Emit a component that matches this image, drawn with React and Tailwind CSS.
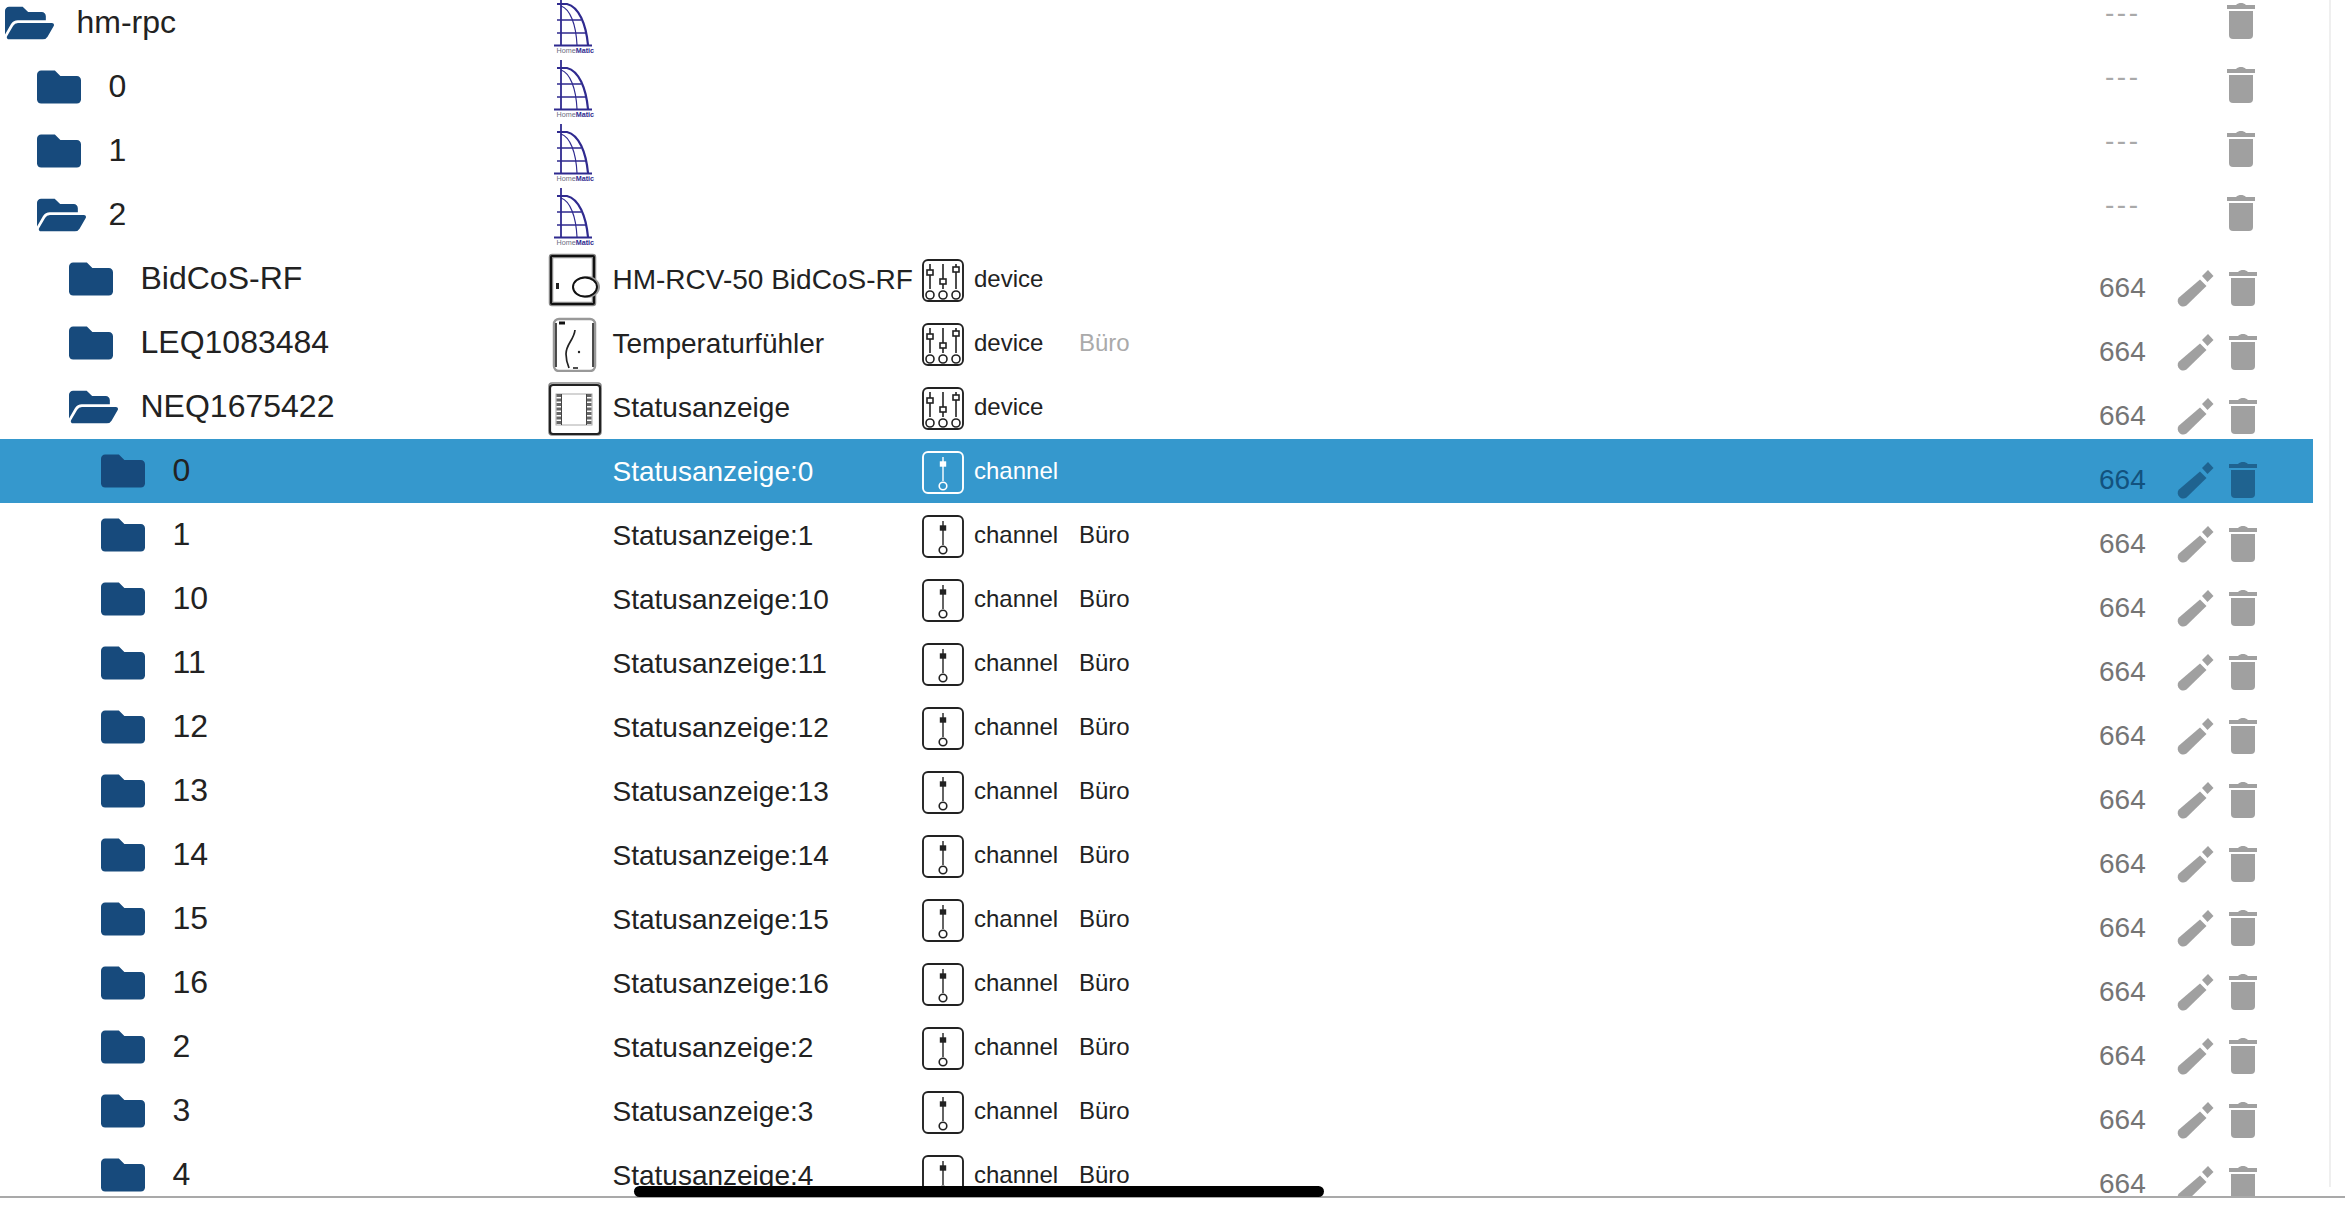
import { FaFolder, FaFolderOpen } from 'react-icons/fa';

const rows = [
  { level: 0, label: 'hm-rpc', open: true, image: 'logo' },
  { level: 1, label: '0', image: 'logo' },
  { level: 1, label: '1', image: 'logo' },
  { level: 1, label: '2', open: true, image: 'logo' },
  { level: 2, label: 'BidCoS-RF', image: 'door', name: 'HM-RCV-50 BidCoS-RF', type: 'device' },
  { level: 2, label: 'LEQ1083484', image: 'sensor', name: 'Temperaturfühler', type: 'device', room: 'Büro', roomMuted: true },
  { level: 2, label: 'NEQ1675422', open: true, image: 'display', name: 'Statusanzeige', type: 'device' },
  { level: 3, label: '0', name: 'Statusanzeige:0', type: 'channel', selected: true },
  ...['1', '10', '11', '12', '13', '14', '15', '16', '2', '3', '4'].map((n) => ({
    level: 3,
    label: n,
    name: `Statusanzeige:${n}`,
    type: 'channel',
    room: 'Büro',
  })),
];

const indent = ['pl-[5px]', 'pl-[37px]', 'pl-[69px]', 'pl-[101px]'];

const HomeMaticLogo = () => (
  <svg viewBox="0 0 58 58" className="w-[58px] h-[58px] overflow-visible" fill="none" stroke="#2f2a8f">
    <path d="M15 2v49" strokeWidth="1.8" />
    <path d="M11 10h10c12 3 19 20 21 41" strokeWidth="2.2" />
    <path d="M15 12c9 3 15 18 16 39" strokeWidth="1.2" />
    <path d="M11 26h24M11 39h29" strokeWidth="1.3" />
    <path d="M8 51.500h38" strokeWidth="2" />
    <text x="10.500" y="58.5" fontSize="7.2" stroke="none" fill="#6b6b80" fontFamily="Liberation Sans">
      Home<tspan fontWeight="700" fill="#2f2a8f">Matic</tspan>
    </text>
  </svg>
);

const DoorImage = () => (
  <svg viewBox="0 0 58 58" className="w-[58px] h-[58px] overflow-visible" fill="none">
    <rect x="5" y="6" width="43" height="48" rx="1" stroke="#888" strokeWidth="4.5" />
    <rect x="5" y="6" width="43" height="48" rx="1" stroke="#111" strokeWidth="2" />
    <rect x="10" y="33" width="3" height="6" fill="#222" />
    <ellipse cx="41" cy="37" rx="12" ry="10" fill="#fff" stroke="#999" strokeWidth="2" />
    <ellipse cx="39" cy="37" rx="12" ry="9.500" fill="#fff" stroke="#111" strokeWidth="2" />
  </svg>
);

const SensorImage = () => (
  <svg viewBox="0 0 58 58" className="w-[58px] h-[58px]" fill="none">
    <rect x="8" y="5" width="41" height="52" rx="5" stroke="#999" strokeWidth="2.5" />
    <path d="M10 9v44M47 9v44" stroke="#222" strokeWidth="1.6" />
    <path d="M13 9h6" stroke="#111" strokeWidth="3" />
    <path d="M29 16c-1 10-9 14-9 24 0 5 1 9 3 14" stroke="#222" strokeWidth="1.7" />
    <circle cx="33" cy="38" r="1.2" fill="#222" />
    <path d="M27 54h5" stroke="#222" strokeWidth="1.6" />
  </svg>
);

const DisplayImage = () => (
  <svg viewBox="0 0 58 58" className="w-[58px] h-[58px]" fill="none">
    <rect x="3" y="5" width="52" height="52" rx="3" stroke="#888" strokeWidth="1.5" />
    <rect x="4" y="7" width="50" height="49" rx="3" stroke="#222" strokeWidth="2.2" />
    <rect x="10" y="16" width="36" height="31" stroke="#aaa" strokeWidth="1" />
    <path d="M13 16v31M43 16v31" stroke="#666" strokeWidth="5" strokeDasharray="3 1.5" />
    <path d="M15.500 16v31M40.500 16v31" stroke="#444" strokeWidth="1" />
  </svg>
);

const images = {
  logo: HomeMaticLogo,
  door: DoorImage,
  sensor: SensorImage,
  display: DisplayImage,
};

const DeviceIcon = ({ color }) => (
  <svg viewBox="0 0 42 43" className="w-[42px] h-[43px]" fill="none" stroke={color} strokeWidth="1.6">
    <rect x="1" y="1" width="40" height="41" rx="5" strokeWidth="1.9" />
    <path d="M8 5v25M21 5v25M34 5v25" />
    <rect x="5" y="11" width="6" height="5" fill="#fff" />
    <rect x="18" y="20" width="6" height="5" fill="#fff" />
    <rect x="31" y="8" width="6" height="5" fill="#fff" />
    <circle cx="8" cy="36" r="4" />
    <circle cx="21" cy="36" r="4" />
    <circle cx="34" cy="36" r="4" />
  </svg>
);

const ChannelIcon = ({ color }) => (
  <svg viewBox="0 0 42 43" className="w-[42px] h-[43px]" fill="none" stroke={color} strokeWidth="1.4">
    <rect x="1" y="1" width="40" height="41" rx="5" strokeWidth="1.9" />
    <path d="M21 6v24" />
    <rect x="18.500" y="11" width="5" height="4" fill={color} />
    <circle cx="21" cy="35" r="3.800" strokeWidth="1.600" />
  </svg>
);

const PencilIcon = ({ color }) => (
  <svg viewBox="0 0 36 36" className="w-[36px] h-[36px] overflow-visible" fill={color}>
    <path d="M31 0l5.500 6-6 6-5.500-6z" />
    <path d="M23 9.500l6.500 6.500-20 19.500c-2.500 1.700-5 1.400-7-.5-2-2-2.500-4.800-.8-7.200z" />
  </svg>
);

const TrashIcon = ({ color }) => (
  <svg viewBox="0 0 28 36" className="w-[28px] h-[36px]" fill={color}>
    <path d="M9 2c3-2.600 7-2.600 10 0h9v4H0V2z" />
    <path d="M2 8h24v24a4 4 0 0 1-4 4H6a4 4 0 0 1-4-4z" />
  </svg>
);

const TreeRow = ({ row }) => {
  const Image = row.image && images[row.image];
  const Folder = row.open ? FaFolderOpen : FaFolder;
  const textColor = row.selected ? 'text-white' : 'text-[#222]';
  const iconColor = row.selected ? '#ffffff' : '#222222';
  const actionColor = row.selected ? '#1f6390' : '#a0a0a0';

  return (
    <div className={`flex h-16 items-center ${row.selected ? 'bg-[#3598cd]' : ''}`}>
      <div className={`flex w-[543px] shrink-0 items-center ${indent[row.level]}`}>
        <div className="w-[71.5px] shrink-0">
          <Folder className={`text-[#174a7c] ${row.open ? 'w-[49px] h-[44px]' : 'w-[44px] h-[44px]'}`} />
        </div>
        <span className="-mt-[2px] text-[32px] text-[#222]">{row.label}</span>
      </div>

      <div className="flex w-16 shrink-0 justify-center">{Image && <Image />}</div>

      <div className={`mt-[1px] w-[315px] shrink-0 pl-[5.5px] text-[28px] whitespace-nowrap ${textColor}`}>{row.name}</div>

      {row.type && (
        <div className={`flex items-center text-2xl ${textColor}`}>
          <div className="mt-[2px] mr-[10px]">
            {row.type === 'device' ? <DeviceIcon color={iconColor} /> : <ChannelIcon color={iconColor} />}
          </div>
          <span className="w-[105px]">{row.type}</span>
          {row.room && <span className={row.roomMuted ? 'text-[#aaaaaa]' : ''}>{row.room}</span>}
        </div>
      )}

      {row.type ? (
        <div className="ml-auto flex items-center pr-[56px] mt-[17px]">
          <span className={`w-[78px] text-[28px] ${row.selected ? 'text-[#12527e]' : 'text-[#757575]'}`}>664</span>
          <div className="mr-4">
            <PencilIcon color={actionColor} />
          </div>
          <TrashIcon color={actionColor} />
        </div>
      ) : (
        <div className="ml-auto flex items-center pr-[58px]">
          <span className="w-[122px] -mt-[20px] text-[28px] leading-[20px] tracking-[2.5px] text-[#a9a9a9]">---</span>
          <div className="-mt-[4px]">
            <TrashIcon color={actionColor} />
          </div>
        </div>
      )}
    </div>
  );
};

const App = () => {
  return (
    <div className="relative h-[1212px] w-[2345px] overflow-hidden bg-white font-['Liberation_Sans',sans-serif]">
      <div className="h-[1198px] overflow-hidden border-b-2 border-[#a9a9a9]">
        <div className="h-full w-[2331px] border-r-2 border-[#efefef] pr-[16px]">
          <div className="-mt-[9px]">
            {rows.map((row, i) => (
              <TreeRow row={row} key={i} />
            ))}
          </div>
        </div>
      </div>
      <div className="absolute left-[634px] top-[1186px] h-[11px] w-[690px] rounded-full bg-black" />
    </div>
  );
};

export default App;
